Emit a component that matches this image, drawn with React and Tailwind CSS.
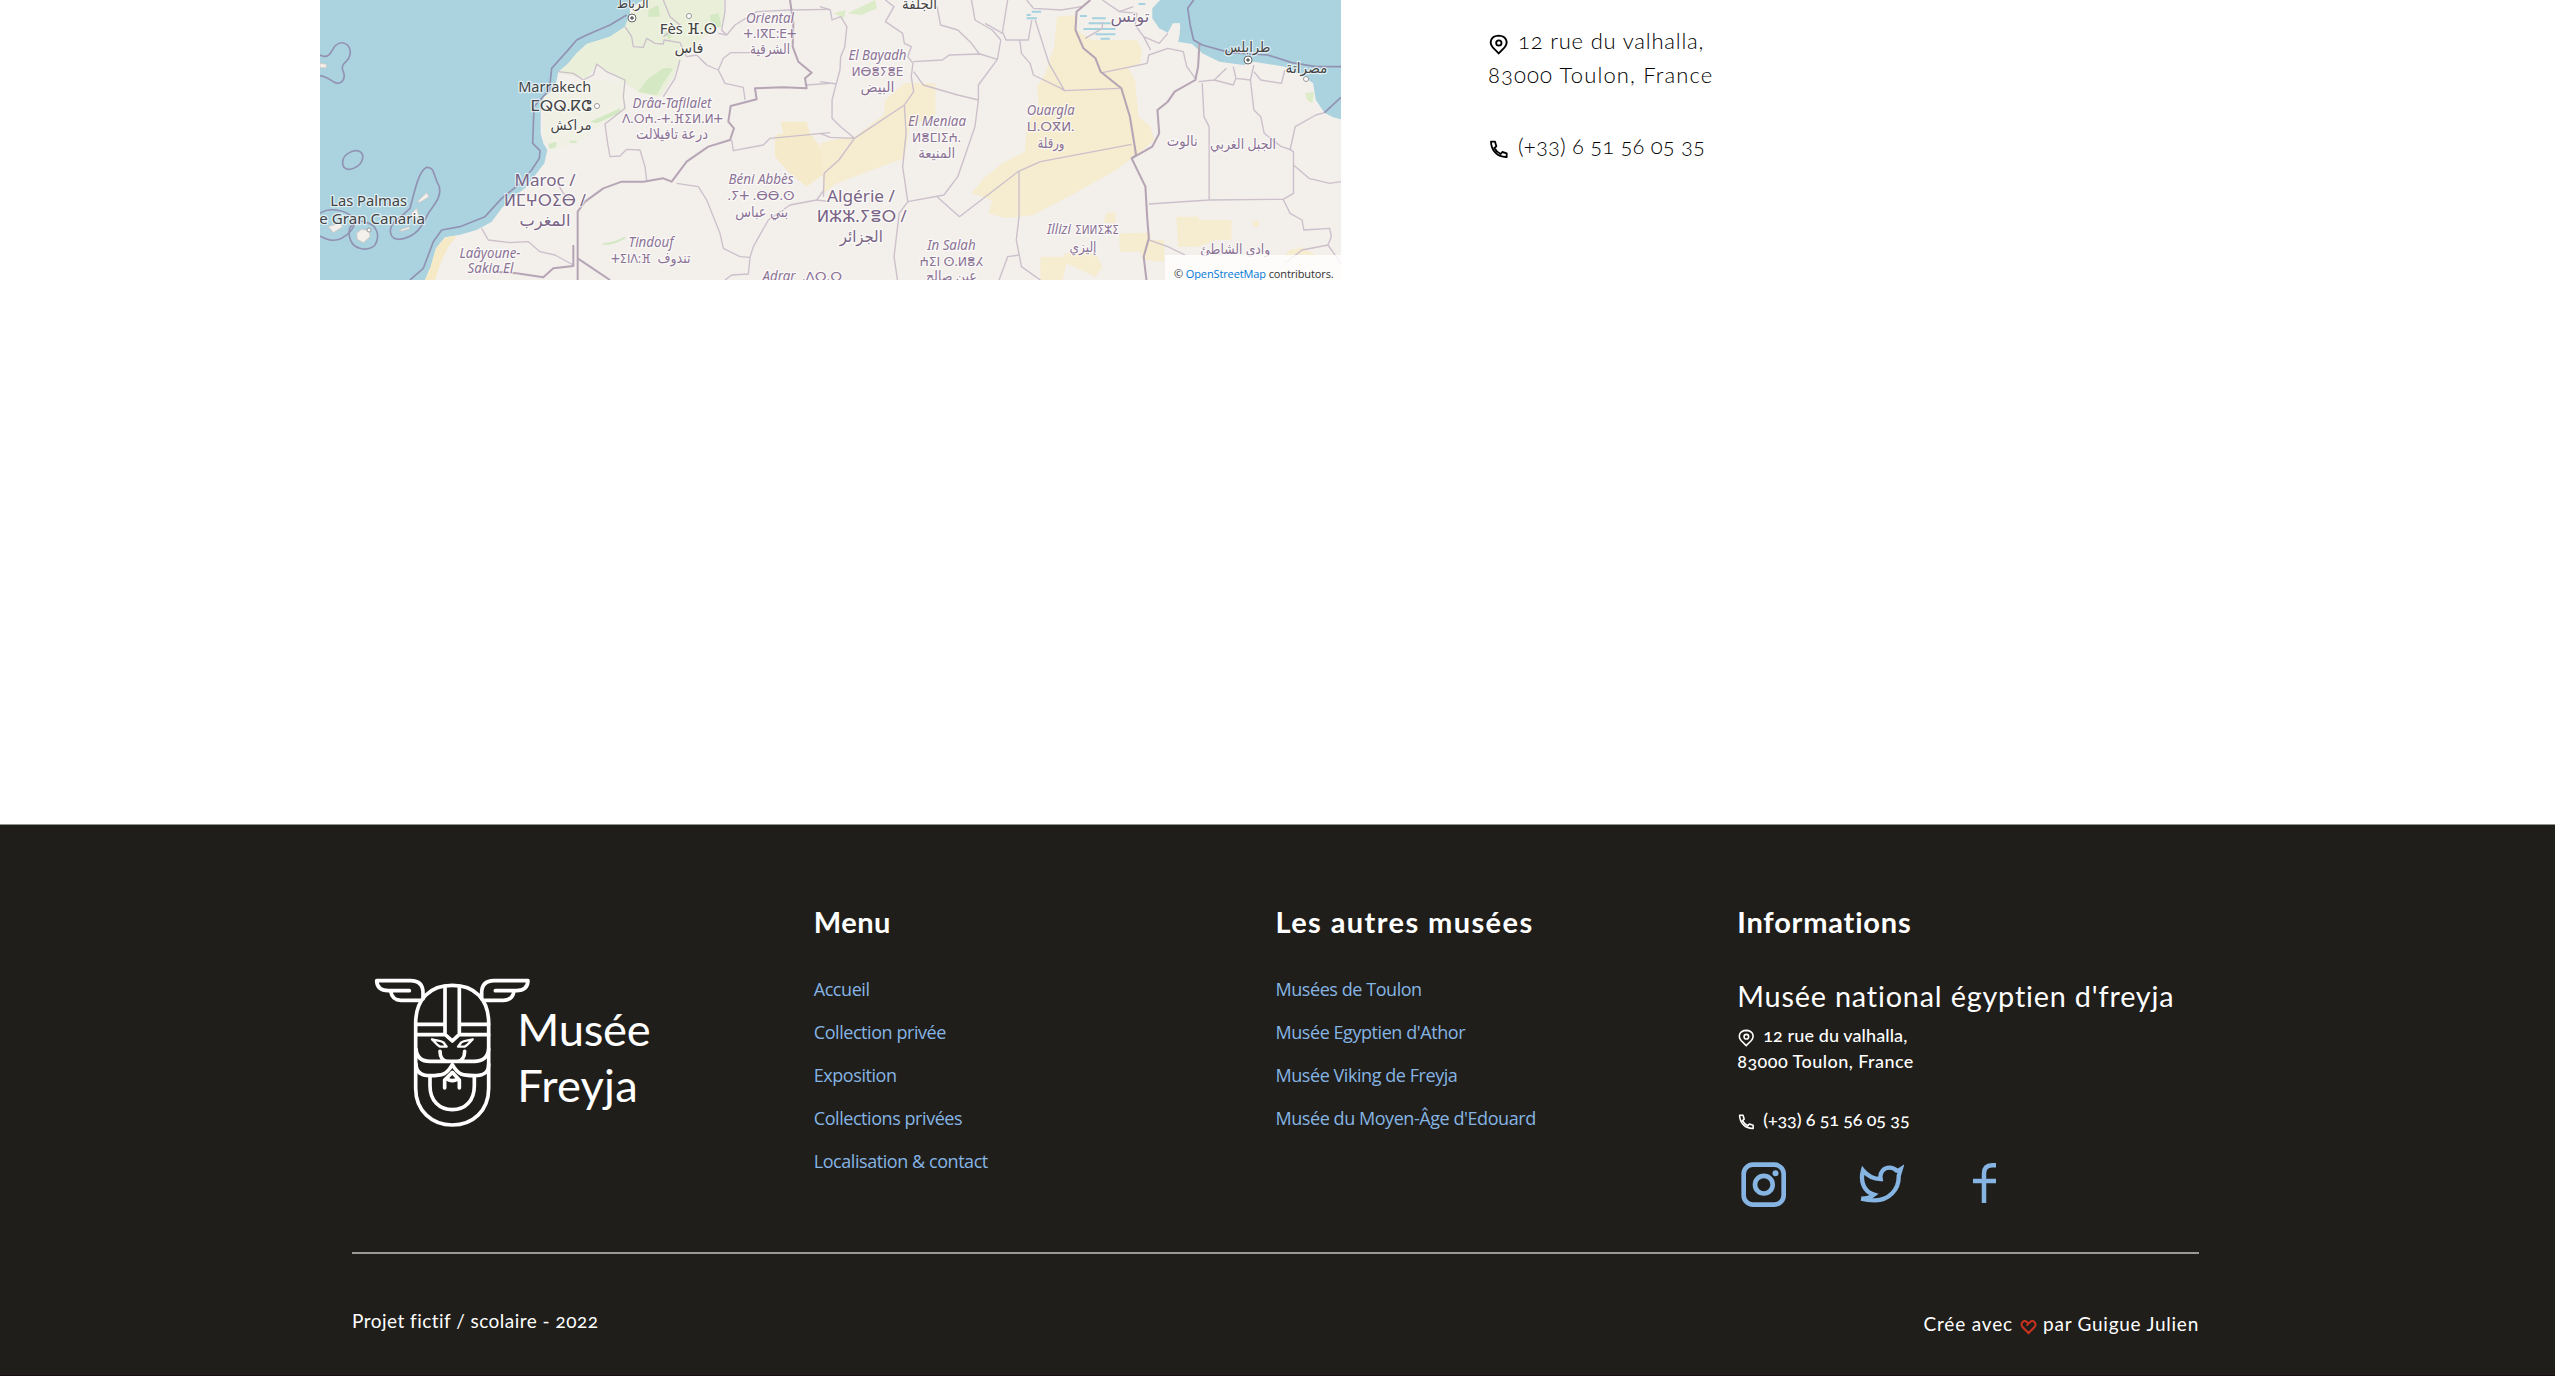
const CITY = "city";
const REGION = "region";
const PLAIN = "plain";
const COUNTRY = "country";
const ARABIC = "arabic";

// [text, centre x, baseline, width, kind]
const labels = [
  ["الرباط", 312.7, 8, 32, CITY],
  ["Fès ⴼ.ⵙ", 368.3, 34, 57, CITY],
  ["فاس", 369, 53, 29, CITY],
  ["Oriental", 450, 23, 48, REGION],
  ["ⵜ.ⵏⴳⵎ:ⴹⵜ", 450, 38, 53, PLAIN],
  ["الشرقية", 450, 54, 40, ARABIC],
  ["Marrakech", 234.7, 92, 73, CITY],
  ["ⵎⵕⵕ.ⴽⵛ", 241, 111, 61, CITY],
  ["مراكش", 251, 130, 41, CITY],
  ["Drâa-Tafilalet", 352, 108, 79, REGION],
  ["ⴷ.ⵔⵄ.-ⵜ.ⴼⵉⵍ.ⵍⵜ", 352.5, 123, 101, PLAIN],
  ["درعة تافيلالت", 352, 139, 72, ARABIC],
  ["Maroc /", 225, 186, 61, COUNTRY],
  ["ⵍⵎⵖⵔⵉⴱ /", 225, 206, 82, COUNTRY],
  ["المغرب", 225, 226, 51, COUNTRY],
  ["Las Palmas", 48.7, 206, 77, CITY],
  ["de Gran Canaria", 47.5, 224, 115, CITY],
  ["Laâyoune-", 170, 258, 61, REGION],
  ["Sakia El", 170.5, 273, 46, REGION],
  ["Tindouf", 331, 247, 45, REGION],
  ["ⵜⵉⵏⴷ:ⴼ", 311, 263, 40, PLAIN],
  ["تندوف", 354, 263, 33, ARABIC],
  ["Béni Abbès", 441, 184, 65, REGION],
  [".ⵢⵜ .ⴱⴱ.ⵙ", 441, 200, 67, PLAIN],
  ["بني عباس", 441.7, 217, 53, ARABIC],
  ["Adrar", 459, 281, 33, REGION],
  [".ⴷⵔ.ⵔ", 502, 281, 40, PLAIN],
  ["الجلفة", 599.5, 9, 35, CITY],
  ["El Bayadh", 557.5, 60, 58, REGION],
  ["ⵍⴱⴻⵢⴻⴹ", 557.5, 76, 52, PLAIN],
  ["البيض", 557.5, 92, 34, ARABIC],
  ["El Meniaa", 617, 126, 58, REGION],
  ["ⵍⴻⵎⵏⵉⵄ.", 616.6, 142, 49, PLAIN],
  ["المنيعة", 616.7, 158, 37, ARABIC],
  ["Ouargla", 730.7, 115, 48, REGION],
  ["ⵡ.ⵔⴳⵍ.", 730.7, 131, 48, PLAIN],
  ["ورقلة", 731, 148, 27, ARABIC],
  ["Algérie /", 541, 202, 68, COUNTRY],
  ["ⵍⵣⵣ.ⵢⴻⵔ /", 541.7, 222, 90, COUNTRY],
  ["الجزائر", 541.3, 242, 43, COUNTRY],
  ["In Salah", 631.4, 250, 48.5, REGION],
  ["ⵄⵉⵏ ⵙ.ⵍⴻⵃ", 631.4, 266, 64, PLAIN],
  ["عين صالح", 631.4, 281, 51, ARABIC],
  ["Illizi", 739, 234, 24, REGION],
  ["ⵉⵍⵍⵉⵣⵉ", 777, 234, 44, PLAIN],
  ["إليزي", 763, 252, 27, ARABIC],
  ["تونس", 810, 22, 39, COUNTRY],
  ["طرابلس", 927.5, 52, 46, CITY],
  ["مصراتة", 986.5, 73, 42, CITY],
  ["نالوت", 862.3, 146, 31, ARABIC],
  ["الجبل الغربي", 923, 149, 66, ARABIC],
  ["وادي الشاطئ", 915.3, 254, 70, ARABIC],
];

const labelClass = {
  city: "fill-[#444444] text-[14.5px]",
  region: "fill-[#8c7396] text-[13.5px] italic",
  plain: "fill-[#8c7396] text-[13px]",
  arabic: "fill-[#8c7396] text-[14.5px]",
  country: "fill-[#796485] text-[16px]",
};

function MapView() {
  return (
    <div className="relative h-[280px] w-[1021px] shrink-0 overflow-hidden">
      <svg viewBox="0 0 1021 280" className="block h-[280px] w-[1021px]" fill="none">
        <rect width="1021" height="280" fill="#aad3df" />

        {/* western half */}
        <g transform="translate(-10 0) scale(0.33333)" strokeLinejoin="round">
          <path fill="#f3efeb" d="M345 840L362 800 378 745 405 712 450 704 500 690 545 665 575 625 600 600 650 560 680 520 703 490 712 450 700 430 692 400 692 340 705 290 735 265 745 215 775 190 800 160 830 132 900 110 945 80 960 50 960 25 1000 0H3200V840Z" />
          <path fill="#f6e9c6" d="M345 840L362 800 378 745 405 712 440 708 415 740 395 780 375 840Z" />
          <path fill="#eaefd9" d="M745 220L775 190 800 160 830 132 900 110 945 80 960 40 1000 0H1240L1245 60 1170 120 1110 180 1090 230 1050 290 990 280 940 245 900 215 860 195 830 235Z" />
          <path fill="#f0f0e5" d="M700 290L735 270 860 240 940 245 950 330 880 370 800 430 730 450 700 420Z" />
          <path fill="#d4e8c4" d="M985 275L1010 240 1060 205 1090 205 1060 250 1040 285ZM1015 30L1045 15 1050 50 1015 50ZM1200 45L1225 40 1235 80 1205 85ZM840 365L930 325 930 338 860 370ZM715 432L740 425 738 442 718 446ZM1060 100L1090 90 1080 120ZM780 422H800V428H780Z" />
          <path fill="#f5ebcb" d="M1412 365H1490L1500 400 1530 440 1545 520 1490 560 1440 520 1395 470 1395 405 1420 400Z" />
          <path stroke="#d4e8c4" strokeWidth="6" d="M880 732C905 732 925 725 945 712" />
          <path fill="#f3efeb" stroke="#cfc3c0" strokeWidth="2" d="M30 190L50 193 48 203 30 203ZM322 605L350 578 357 590 330 607ZM305 640L320 625 326 645 310 665ZM140 700L155 688 178 692 180 710 160 728 142 718ZM55 680L90 668 98 680 70 698ZM268 690L298 680 300 686 275 694Z" />

          <g stroke="#9292b2" strokeWidth="5">
            <path d="M950 45L900 75 830 105 800 120 770 155 725 205 718 270 690 300 672 320 668 430 690 452 688 475 665 510 625 555 575 595 525 650 450 680 395 690 370 725 340 805 300 840" />
            <path d="M30 165C60 180 65 150 75 138C95 118 125 132 120 165C116 190 92 185 98 210C110 235 95 260 70 245C55 235 45 230 30 227" />
            <path d="M98 490C95 465 130 445 150 455C165 465 158 490 140 500C120 514 100 510 98 490Z" />
            <path d="M242 700C235 670 270 655 300 625C315 570 325 515 350 502C375 500 370 530 388 560C395 590 375 610 355 640C335 680 320 710 270 718C255 718 245 715 242 700Z" />
            <path d="M30 640C60 620 110 630 130 655C140 680 120 700 95 715C75 725 50 720 30 708" />
            <path d="M118 708C112 675 140 655 170 668C200 675 212 705 195 735C175 755 125 752 118 708Z" />
          </g>

          <g stroke="#cbc0cb" strokeWidth="4">
            <path d="M945 80L965 110 970 140 1000 142 1010 115 1035 130 1060 132 1062 120 1110 128 1130 170 1160 165 1190 195 1225 210 1240 175 1262 158 1320 158" />
            <path d="M745 215L790 220 820 240 850 225 860 192 890 215 945 240 940 290 945 325 885 372 893 430 900 470 930 468 950 448 990 450 1005 500 1010 540" />
            <path d="M1110 180L1095 235 1060 290M1245 0V35L1235 90 1250 105 1225 100M1060 0L1080 50 1110 75 1060 110M1250 105L1275 75 1340 35 1440 30M1225 210L1245 250 1300 262 1305 300M1440 30L1560 28M1490 255L1560 250" />
            <path d="M1265 420L1270 452 1360 435 1380 415 1560 398M1100 550L1165 560 1190 600 1230 700 1240 745 1290 770 1320 772 1330 740 1375 660 1440 615 1520 600 1545 565 1540 520 1560 495M1320 772L1315 822 1265 825 1245 840M1520 600L1560 605" />
            <path d="M515 685L535 720 600 728 655 725 690 755 735 765 790 795M740 545L760 580 790 605" />
          </g>
          <g stroke="#b5a5b5" strokeWidth="6">
            <path d="M1440 0L1450 70 1448 140 1465 185 1505 218 1485 235 1490 265 1420 262 1335 265 1340 298 1262 318 1255 365 1272 385 1260 420 1195 440 1130 485 1085 545 1060 535 1000 545 935 545 880 565 825 605 803 635V840" />
            <path d="M803 775L900 840M790 735V798L730 805 700 832 620 820 550 815" />
          </g>
        </g>

        {/* eastern half */}
        <g transform="translate(500 0) scale(0.34435 0.33333)" strokeLinejoin="round">
          <path fill="#f6eccf" d="M688 50L740 45 745 90 790 120H920L935 150 930 190 895 205 915 240 925 350 960 380 970 420 920 465 860 510 740 580 620 645 540 655 490 640 500 600 440 580 480 530 530 490 595 455 600 380 635 310 630 260 655 220 680 140Z" />
          <path fill="#f6eccf" d="M245 250H335V345L260 380 245 475 150 510 50 550 10 580 0 430 60 415 100 410 185 345 190 300Z" />
          <path fill="#f6eccf" d="M1035 650H1100V660H1195V720H1150L1100 740H1040ZM870 700L960 698V720H1000V785L940 780 930 755H870ZM830 640L858 636V670L825 668ZM640 770H710V760H800L820 800 800 830 715 790 705 840H640ZM1255 662H1275V680H1258ZM1365 750L1400 742 1440 765H1350Z" />
          <path fill="#dcebc8" d="M80 40L160 0 165 25 120 45ZM1408 280L1435 275 1430 310 1415 300ZM40 40L75 30 70 55Z" />
          <path fill="#aad3df" d="M988 0L965 25 965 55 985 85 1010 98 1025 70 1045 70 1045 100 1040 125 1080 132 1110 160 1160 185 1230 195 1260 185 1300 192 1350 200 1405 230 1432 250 1440 300 1465 338 1490 352 1513 358V0Z" />
          <path fill="#f3efeb" d="M1022 72L1045 70 1046 85 1030 108 1022 100Z" />
          <path stroke="#a5d2df" strokeWidth="6" d="M600 55H630M615 35H642M600 45H612M790 55H830M780 70H845M765 87H858M800 103H858M815 116H842M755 48H775M925 12H945" />

          <g stroke="#cbc0cb" strokeWidth="4">
            <path d="M0 20L30 30 35 60 60 50 78 80 72 140 60 170 58 210 45 260 35 300 35 355 60 380 100 415 30 412 0 400M0 245L48 252" />
            <path d="M190 0L215 20 190 65 240 100 245 130 265 140 255 170 270 190 265 230 272 275 245 315 100 415 55 480 12 520 10 590M270 185L355 180 375 165 465 162 515 178 460 255 460 300 400 285 300 255 272 215" />
            <path d="M340 20L350 75 400 90 440 130 465 165M440 0L450 60 500 90 525 120 515 178M530 95L540 120H605L615 60M480 70L530 100M545 0L530 95M460 300L450 380 400 530 360 585 255 605M245 315L250 400 240 500 255 605 230 640 215 770 225 840" />
            <path d="M580 120L585 160 610 190 620 225 700 265 710 272 870 265M710 272L665 190 625 60M340 590L405 650 575 515 640 485 905 433M578 515V650L570 720 585 800 640 840M520 840L545 770 580 765" />
            <path d="M770 115L820 85 820 65M820 218L950 190 955 165 1010 145 1055 155 1065 200 1090 235M870 35L920 40 915 75 940 110 985 130 1010 100M940 110L960 150" />
            <path d="M1110 250L1115 350 1130 380V600M955 612L1130 600 1345 598 1365 640 1400 660 1405 690 1480 685 1485 710 1475 735 1400 750 1350 790M1475 735L1513 790M1345 598L1375 580 1375 455 1365 450 1380 380 1440 345 1465 338M1250 240L1260 330 1280 350 1290 400 1340 440 1370 450M1375 495L1420 535 1480 550 1513 545" />
            <path d="M1145 240L1180 205M1100 245L1145 240 1200 255 1208 235 1200 200M1208 235L1250 240 1260 195M1260 215L1280 240 1340 250 1350 210M955 720L1010 740 1060 765" />
            <path d="M600 0L620 25 700 30 760 20M820 0L870 35 910 20" />
          </g>
          <g stroke="#b5a5b5" strokeWidth="6">
            <path d="M785 0L745 35 742 90 765 145 800 175 815 215 875 265 900 350 918 465 905 475 945 560 950 650 955 715 940 770 948 840M905 475L965 440 985 400 980 330 1010 305 1030 275 1090 240 1098 200 1102 130" />
            <path stroke="#9292b2" strokeWidth="5" d="M1085 0L1068 25 1075 75 1085 120 1110 135 1190 158 1300 165 1370 188 1440 200H1513M1465 338L1513 292" />
          </g>
        </g>

        <g stroke="#666666" strokeWidth="1" fill="#ffffff">
          <circle cx="312" cy="18" r="4" /><circle cx="312" cy="18" r="1.3" fill="#666666" />
          <circle cx="928" cy="60" r="4" /><circle cx="928" cy="60" r="1.3" fill="#666666" />
          <g stroke="#999999">
            <circle cx="369" cy="16" r="2.5" />
            <circle cx="277" cy="106" r="2.5" />
            <circle cx="49" cy="230" r="2" />
            <circle cx="986" cy="79" r="2.5" />
          </g>
        </g>

        <g
          className="font-['Noto_Sans','DejaVu_Sans',sans-serif]"
          textAnchor="middle"
          stroke="#ffffff"
          strokeOpacity="0.65"
          strokeWidth="2.5"
          strokeLinejoin="round"
          paintOrder="stroke"
        >
          {labels.map(([text, x, y, width, kind]) => (
            <text key={text} x={x} y={y} textLength={width} lengthAdjust="spacingAndGlyphs" className={labelClass[kind]}>
              {text}
            </text>
          ))}
        </g>
      </svg>
      <div className="absolute right-0 bottom-0 h-[25px] w-[176px] bg-white/80 pt-[9px] pl-[9px] font-['Open_Sans',sans-serif] text-[11px] leading-[20px] tracking-[-0.12px] whitespace-nowrap text-[#333333]">
        © <a className="text-[#0078d7]">OpenStreetMap</a> contributors.
      </div>
    </div>
  );
}

function PinIcon({ className }) {
  return (
    <svg viewBox="84 99 66 69" className={className} fill="none" stroke="currentColor" strokeWidth="5.5">
      <path d="M116 160L99 143C86 128 92 108 116 107C140 108 146 128 133 143Z" />
      <circle cx="116.500" cy="129" r="8" />
    </svg>
  );
}

function PhoneIcon({ className }) {
  return (
    <svg viewBox="84 414 66 66" className={className} fill="none" stroke="currentColor" strokeWidth="5.5" strokeLinejoin="round">
      <path d="M93 425H105L109 439L103 444C107 452 114 458 122 462L127 456L140 460V471C113 472 94 453 93 425Z" />
    </svg>
  );
}

function Logo() {
  return (
    <svg viewBox="96 75 846 465" className="mt-[70px] ml-5 h-[155px] w-[282px]" fill="none" stroke="#ffffff" strokeWidth="11" strokeLinecap="round" strokeLinejoin="round">
      <path d="M227 223C227 150 270 109 337 109S446 150 446 223V418C446 486 398 528 337 528S227 486 227 418Z" />
      <path d="M249 150V132C249 108 236 95 212 95H110C111 116 124 126 148 125H208M152 127C155 146 164 154 183 154H240" />
      <path d="M425 150V132C425 108 438 95 462 95H564C563 116 550 126 526 125H466M522 127C519 146 510 154 491 154H434" />
      <path d="M315 112V256L337 276L358 256V112M228 226H315M358 226H446M228 257H315M358 257H446" />
      <path strokeWidth="7" d="M276 271C287 275 302 274 310 280L320 293H300C290 288 286 280 276 271M398 271C387 275 372 274 364 280L354 293H374C384 288 388 280 398 271" />
      <path d="M228 300C230 325 246 337 270 337H403C427 337 444 325 446 300M300 307C300 325 309 337 323 337M374 307C374 325 365 337 351 337" />
      <path d="M337 347C319 378 307 380 270 380C246 380 228 372 228 345M337 347C355 378 367 380 403 380C430 380 446 372 446 345" />
      <path d="M270 384V410C270 455 298 482 337 482S403 455 403 410V384M314 417V393L337 370L358 393V417M322 389C328 397 346 397 352 389" />
      <g className="fill-white font-['Lato',sans-serif]" stroke="none">
        <text x="532" y="290" fontSize="136" textLength="400">Musée</text>
        <text x="532" y="458" fontSize="136" textLength="361">Freyja</text>
      </g>
    </svg>
  );
}

function Socials() {
  return (
    <div className="mt-[29px] ml-[3px] flex items-start text-[#86b4e3]">
      <svg viewBox="120 848 141 141" className="size-[47px]" fill="none" stroke="currentColor" strokeWidth="14">
        <rect x="131" y="859" width="120" height="120" rx="28" />
        <circle cx="191.500" cy="919" r="26.500" />
        <circle cx="226.500" cy="885" r="9" fill="currentColor" stroke="none" />
      </svg>
      <svg viewBox="471 852 141 126" className="mt-px ml-[70px] h-[42px] w-[47px]" fill="none" stroke="currentColor" strokeWidth="13" strokeLinejoin="miter" strokeMiterlimit="3">
        <path d="M489 877C503 894 521 903 542 903C538 881 553 869 568 869C578 869 585 873 590 878C594 878 599 876 602 874L596 894C598 935 566 967 525 967C509 967 494 965 484 962C498 962 512 958 522 950C491 941 480 909 489 877Z" />
      </svg>
      <svg viewBox="810 846 90 132" className="ml-[66px] h-[44px] w-[30px]" fill="none" stroke="currentColor" strokeWidth="13.500">
        <path d="M852 972V884C852 867 860 859 876 859H888M819 906H888" />
      </svg>
    </div>
  );
}

function HeartIcon() {
  return (
    <svg viewBox="356 268 56 54" className="mt-[8px] h-[18px] w-[19px] text-[#c8321f]" fill="none" stroke="currentColor" strokeWidth="6">
      <path d="M378 291L390 279C398 272 410 284 402 295L384 313L366 295C358 284 370 272 378 279L382 283" />
    </svg>
  );
}

const menuLinks = ["Accueil", "Collection privée", "Exposition", "Collections privées", "Localisation & contact"];
const museumLinks = ["Musées de Toulon", "Musée Egyptien d'Athor", "Musée Viking de Freyja", "Musée du Moyen-Âge d'Edouard"];

function Links({ items }) {
  return (
    <ul className="mt-[29px] font-['Open_Sans',sans-serif] text-[18px] leading-[43px] tracking-[-0.44px] text-[#86b4e3]">
      {items.map((item) => (
        <li key={item}>
          <a>{item}</a>
        </li>
      ))}
    </ul>
  );
}

export default function App() {
  return (
    <div className="flex h-[1376px] w-[2555px] flex-col overflow-hidden bg-white font-['Lato',sans-serif] oldstyle-nums">
      <main className="flex h-[824px] items-start pl-[320px]">
        <MapView />
        <address className="ml-[147px] pt-[24px] text-[22px] leading-[34px] font-light text-black not-italic">
          <div className="flex items-start gap-[8px] tracking-[0.8px]">
            <PinIcon className="mt-[9px] h-[23px] w-[22px]" />
            12 rue du valhalla,
          </div>
          <div className="tracking-[1.15px]">83000 Toulon, France</div>
          <div className="mt-[37px] flex items-start gap-[8px] tracking-[0.17px]">
            <PhoneIcon className="mt-[9px] size-[22px]" />
            (+33) 6 51 56 05 35
          </div>
        </address>
      </main>

      <footer className="h-[551px] shrink-0 border-t border-[#8f938d] bg-[#1f1e1a] px-[352px] pt-[79px] text-white">
        <div className="grid h-[350px] w-[1847px] grid-cols-4 border-b-2 border-[#9a9a97]">
          <div>
            <Logo />
          </div>
          <div>
            <h2 className="text-[29px] leading-[35px] font-bold tracking-[0.5px]">Menu</h2>
            <Links items={menuLinks} />
          </div>
          <div>
            <h2 className="text-[29px] leading-[35px] font-bold tracking-[1.4px]">Les autres musées</h2>
            <Links items={museumLinks} />
          </div>
          <div>
            <h2 className="text-[29px] leading-[35px] font-bold tracking-[0.8px]">Informations</h2>
            <p className="mt-[39px] text-[28.8px] leading-[36px] tracking-[0.82px] whitespace-nowrap">Musée national égyptien d'freyja</p>
            <div className="mt-[8px] flex items-start gap-[7px] text-[18px] leading-[26.4px] font-medium tracking-[0.1px]">
              <PinIcon className="mt-[6px] h-[20px] w-[19px]" />
              12 rue du valhalla,
            </div>
            <div className="text-[18px] leading-[26.4px] font-medium tracking-[0.45px]">83000 Toulon, France</div>
            <div className="mt-[31px] flex items-start gap-[7px] text-[18px] leading-[26.4px] font-medium tracking-[-0.15px]">
              <PhoneIcon className="mt-[6px] size-[19px]" />
              (+33) 6 51 56 05 35
            </div>
            <Socials />
          </div>
        </div>
        <div className="flex w-[1847px] items-start justify-between pt-[53px] text-[19px] leading-[28px]">
          <p className="tracking-[0.47px]">Projet fictif / scolaire - 2022</p>
          <p className="mt-[2.5px] flex items-start gap-[5.5px] tracking-[0.85px]">
            Crée avec
            <HeartIcon />
            <span className="tracking-[0.75px]">par Guigue Julien</span>
          </p>
        </div>
      </footer>
      <div className="h-px bg-[#170f14]" />
    </div>
  );
}
